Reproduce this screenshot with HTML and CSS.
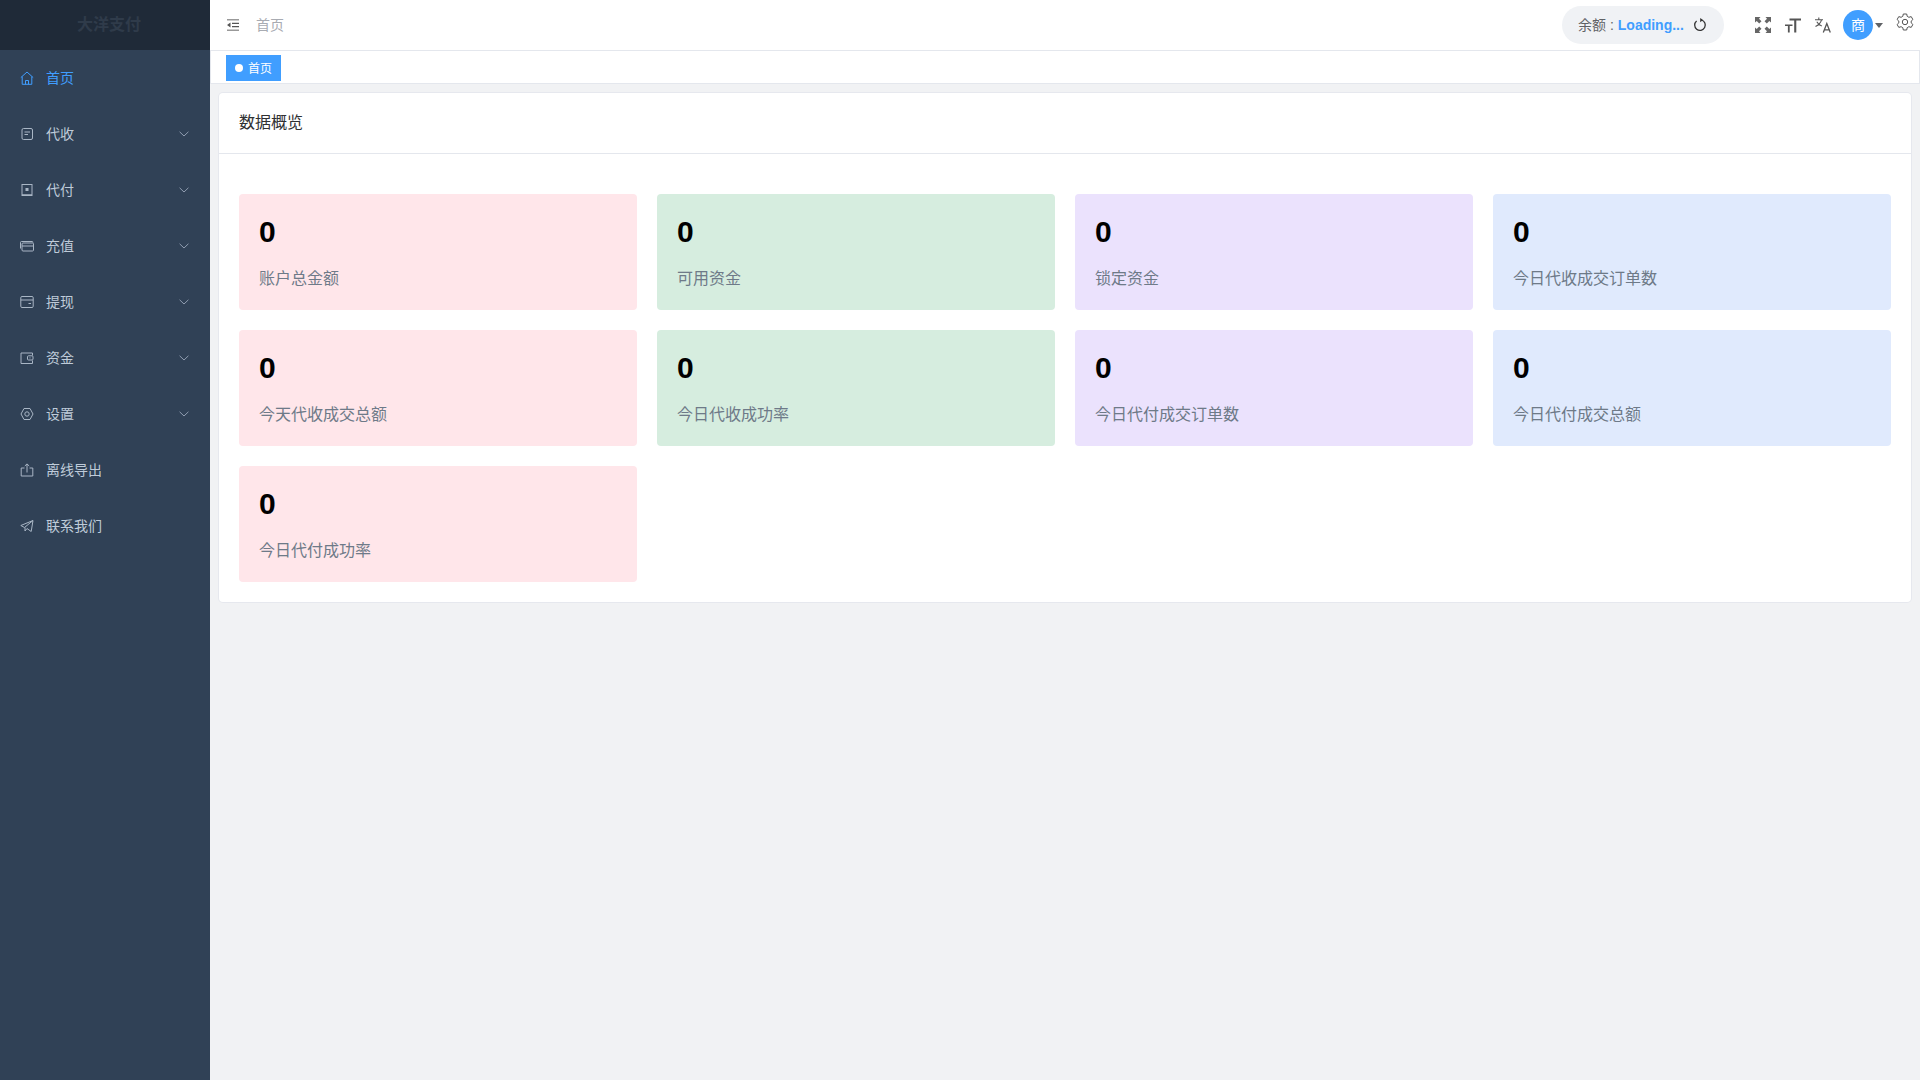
FILE: index.html
```html
<!DOCTYPE html>
<html>
<head>
<meta charset="utf-8">
<title>大洋支付</title>
<link rel="stylesheet" href="styles.css">
</head>
<body>
<div class="app">
  <aside class="sidebar">
    <div class="logo">大洋支付</div>
    <nav class="menu">
      <a class="item active">
        <svg class="ico" viewBox="0 0 14 14" fill="none" stroke="currentColor"><path d="M.8 6.6 7 1l6.2 5.6M2.2 5.600v7.700h9.600V5.600M5.500 13.300V9.500h3v3.800"/></svg>
        <span class="lbl">首页</span></a>
      <a class="item">
        <svg class="ico" viewBox="0 0 14 14" fill="none" stroke="currentColor"><rect x="2" y="1.500" width="10.500" height="11" rx="1.500"/><path d="M4.500 5h5.500M4.500 7.500h3.500"/></svg>
        <span class="lbl">代收</span>
        <svg class="chev" viewBox="0 0 10 6" fill="none" stroke="currentColor"><path d="M.6.800 5 5l4.400-4.200"/></svg></a>
      <a class="item">
        <svg class="ico" viewBox="0 0 14 14" fill="none" stroke="currentColor"><rect x="2" y="1.500" width="10" height="11"/><path d="M2 12h10" stroke-width="1.500"/><rect x="5.500" y="5" width="3" height="3" fill="currentColor" stroke="none"/></svg>
        <span class="lbl">代付</span>
        <svg class="chev" viewBox="0 0 10 6" fill="none" stroke="currentColor"><path d="M.6.800 5 5l4.400-4.200"/></svg></a>
      <a class="item">
        <svg class="ico" viewBox="0 0 14 14" fill="none" stroke="currentColor"><path d="M.5 9.500V3.500q0-1 1-1h10.500q1 0 1 1"/><rect x="2" y="4" width="11.500" height="8" rx="1"/><path d="M2 7h11.500"/></svg>
        <span class="lbl">充值</span>
        <svg class="chev" viewBox="0 0 10 6" fill="none" stroke="currentColor"><path d="M.6.800 5 5l4.400-4.200"/></svg></a>
      <a class="item">
        <svg class="ico" viewBox="0 0 14 14" fill="none" stroke="currentColor"><rect x=".8" y="1.500" width="12.400" height="11" rx="1.200"/><path d="M.8 5h12.400M8.500 8.500h2.500"/></svg>
        <span class="lbl">提现</span>
        <svg class="chev" viewBox="0 0 10 6" fill="none" stroke="currentColor"><path d="M.6.800 5 5l4.400-4.200"/></svg></a>
      <a class="item">
        <svg class="ico" viewBox="0 0 14 14" fill="none" stroke="currentColor"><path d="M12.500 4.500V2H1v10.500h11.500V9.500"/><rect x="7.500" y="4.800" width="5.500" height="4.200" rx="1"/><path d="M9.500 6.900h1"/></svg>
        <span class="lbl">资金</span>
        <svg class="chev" viewBox="0 0 10 6" fill="none" stroke="currentColor"><path d="M.6.800 5 5l4.400-4.200"/></svg></a>
      <a class="item">
        <svg class="ico" viewBox="0 0 14 14" fill="none" stroke="currentColor"><path d="M4 1.500h6L13 7l-3 5.500H4L1 7z" stroke-linejoin="round"/><circle cx="7" cy="7" r="2.200"/></svg>
        <span class="lbl">设置</span>
        <svg class="chev" viewBox="0 0 10 6" fill="none" stroke="currentColor"><path d="M.6.800 5 5l4.400-4.200"/></svg></a>
      <a class="item">
        <svg class="ico" viewBox="0 0 14 14" fill="none" stroke="currentColor"><path d="M4.500 5H1.200v8h11.600V5H9.500M7 9.500V1M4.800 3 7 .9 9.200 3"/></svg>
        <span class="lbl">离线导出</span></a>
      <a class="item">
        <svg class="ico" viewBox="0 0 14 14" fill="none" stroke="currentColor"><path d="M13 1.500.8 6.500l3.700 2 8.500-7-1.800 11-4.200-3-2 2.500V8.500" stroke-linejoin="round"/></svg>
        <span class="lbl">联系我们</span></a>
    </nav>
  </aside>
  <main class="main">
    <header class="topbar">
      <svg class="fold" viewBox="0 0 14 14"><path fill="#999" d="M1 1h12v1.600H1zM1 11.400h12V13H1z"/><path fill="#555" d="M6 4.800h7V6H6zM6 8h7v1.200H6zM4.500 4.500v5L1 7z"/></svg>
      <span class="crumb">首页</span>
      <div class="spacer"></div>
      <div class="balance">
        <span class="bal-label">余额 :</span>
        <b class="bal-value">Loading...</b>
        <svg class="refresh" viewBox="0 0 14 14" fill="none" stroke="#333" stroke-width="1.300"><path d="M3.600 3A5.300 5.300 0 1 0 8.500 2"/><path d="M7.200 0v4.200L10 2.100z" fill="#333" stroke="none"/></svg>
      </div>
      <div class="tools">
        <svg class="tool" viewBox="0 0 18 18" fill="#666"><path d="M1 1h5.500L5 2.700 7.500 5.200 5.200 7.500 2.700 5 1 6.500zM17 1v5.500L15.300 5l-2.500 2.500-2.300-2.300L13 2.700 11.500 1zM1 17v-5.500L2.700 13l2.500-2.500 2.300 2.300L5 15.300 6.500 17zM17 17h-5.500l1.500-1.700-2.500-2.500 2.300-2.300 2.500 2.500 1.700-1.500z"/></svg>
        <svg class="tool" viewBox="0 0 18 18" fill="#555"><path d="M5.500 2.500H17v1.900h-4.700v12.100h-2.100V4.400H5.500zM1 8.500h7.500v1.600H5.700v6.400H3.900v-6.400H1z"/></svg>
        <svg class="tool tool-last" viewBox="0 0 18 18" fill="none" stroke="#555" stroke-width="1.100"><path d="M1 3.800h8M4.800 1.500v2.300M7.500 3.800C6.800 6.500 4.500 9 1.500 10.500M2.800 5.800c1 1.800 3 3.600 5 4.300"/><path d="M9.300 16.500l3.500-9 3.500 9M10.500 13.800h4.700" stroke-width="1.300"/></svg>
        <span class="avatar-wrap">
          <span class="avatar">商</span>
          <i class="caret"></i>
        </span>
        <svg class="gear" viewBox="0 0 18 18" fill="none" stroke="#555" stroke-width="1"><path d="M7.300 1h3.400l.5 2.300 1.700 1 2.300-.7 1.700 2.900-1.700 1.600v1.800l1.700 1.600-1.700 2.900-2.300-.7-1.700 1-.5 2.300H7.300l-.5-2.300-1.700-1-2.300.7-1.700-2.900 1.700-1.600V8.100L1.100 6.500l1.700-2.900 2.300.7 1.700-1z" stroke-linejoin="round"/><circle cx="9" cy="9" r="2.700"/></svg>
      </div>
    </header>
    <div class="tagsbar">
      <span class="tag"><i class="dot"></i>首页</span>
    </div>
    <section class="content">
      <div class="card">
        <div class="card-head">数据概览</div>
        <div class="card-body">
          <div class="stats">
            <div class="stat pink"><div class="num">0</div><div class="cap">账户总金额</div></div>
            <div class="stat green"><div class="num">0</div><div class="cap">可用资金</div></div>
            <div class="stat purple"><div class="num">0</div><div class="cap">锁定资金</div></div>
            <div class="stat blue"><div class="num">0</div><div class="cap">今日代收成交订单数</div></div>
            <div class="stat pink"><div class="num">0</div><div class="cap">今天代收成交总额</div></div>
            <div class="stat green"><div class="num">0</div><div class="cap">今日代收成功率</div></div>
            <div class="stat purple"><div class="num">0</div><div class="cap">今日代付成交订单数</div></div>
            <div class="stat blue"><div class="num">0</div><div class="cap">今日代付成交总额</div></div>
            <div class="stat pink"><div class="num">0</div><div class="cap">今日代付成功率</div></div>
          </div>
        </div>
      </div>
    </section>
  </main>
</div>
</body>
</html>
```
FILE: styles.css
```css
* { box-sizing: border-box; }
html, body { margin: 0; height: 100%; }
body {
  font-family: "Liberation Sans", "Noto Sans CJK JP", sans-serif;
  font-size: 14px;
  background: #f1f2f4;
  overflow: hidden;
}
.app { display: flex; height: 1080px; }
.sidebar { width: 210px; flex: none; background: #304156; }
.logo {
  height: 50px;
  background: #1f2a38;
  color: #2f3b4a;
  font-size: 16px;
  font-weight: 700;
  line-height: 50px;
  text-align: center;
  padding-left: 8px;
}
.menu { display: flex; flex-direction: column; }
.item {
  display: flex;
  align-items: center;
  height: 56px;
  padding: 0 21px 0 20px;
  color: #bfcbd9;
}
.item.active { color: #409eff; }
.ico { width: 14px; height: 14px; flex: none; margin-right: 12px; opacity: .85; }
.active .ico { opacity: 1; }
.lbl { flex: 1; padding-bottom: 2px; }
.chev { width: 10px; height: 6px; color: #909db0; }
.main { flex: 1; min-width: 0; display: flex; flex-direction: column; }
.topbar {
  height: 51px;
  flex: none;
  display: flex;
  align-items: center;
  background: #fff;
  border-bottom: 1px solid #e4e7ed;
  padding-left: 16px;
}
.fold { width: 14px; height: 14px; flex: none; }
.crumb { margin-left: 16px; padding-bottom: 2px; color: #a8abb2; }
.spacer { flex: 1; }
.balance {
  width: 162px;
  height: 38px;
  margin-top: -1px;
  border-radius: 19px;
  background: #f0f2f5;
  display: flex;
  align-items: center;
  padding-left: 16px;
  color: #606266;
}
.bal-label { padding-bottom: 2px; }
.bal-value { color: #409eff; margin-left: 4px; }
.refresh { width: 14px; height: 14px; margin-left: 9px; }
.tools { display: flex; align-items: center; margin-left: 30px; padding-right: 6px; }
.tool { width: 18px; height: 18px; margin-right: 12px; flex: none; }
.tool-last { margin-right: 11px; }
.avatar-wrap { display: flex; align-items: center; }
.avatar {
  width: 30px;
  height: 30px;
  border-radius: 50%;
  background: #409eff;
  color: #fff;
  font-size: 14px;
  line-height: 30px;
  text-align: center;
}
.caret {
  margin-left: 2px;
  border: 4px solid transparent;
  border-top: 5px solid #606266;
  border-bottom: 0;
}
.gear { width: 18px; height: 18px; margin-left: 13px; margin-top: -6px; }
.tagsbar {
  height: 33px;
  flex: none;
  background: #fff;
  border: 1px solid #e4e7ed;
  border-top: 0;
  padding: 4px 0 0 15px;
}
.tag {
  display: inline-flex;
  align-items: center;
  height: 26px;
  width: 55px;
  padding: 0 0 2px 9px;
  background: #409eff;
  color: #fff;
  font-size: 12px;
}
.dot { width: 8px; height: 8px; border-radius: 50%; background: #fff; margin: 2px 5px 0 0; }
.content { flex: 1; padding: 9px 9px 0; }
.card {
  background: #fff;
  box-shadow: 0 0 0 1px #e6e8ee;
  border-radius: 4px;
}
.card-head {
  height: 61px;
  padding: 0 20px;
  border-bottom: 1px solid #e4e7ed;
  color: #303133;
  font-size: 16px;
  line-height: 60px;
}
.card-body { padding: 40px 20px 20px; }
.stats { display: grid; grid-template-columns: repeat(4, 1fr); gap: 20px; }
.stat { height: 116px; border-radius: 4px; padding: 21px 20px 20px; }
.pink { background: #ffe6ea; }
.green { background: #d6eddf; }
.purple { background: #ebe2fd; }
.blue { background: #e0eafd; }
.num { font-size: 30px; font-weight: 700; line-height: 34px; color: #000; }
.cap { margin-top: 18px; font-size: 16px; line-height: 24px; color: #6e7a88; }
```
